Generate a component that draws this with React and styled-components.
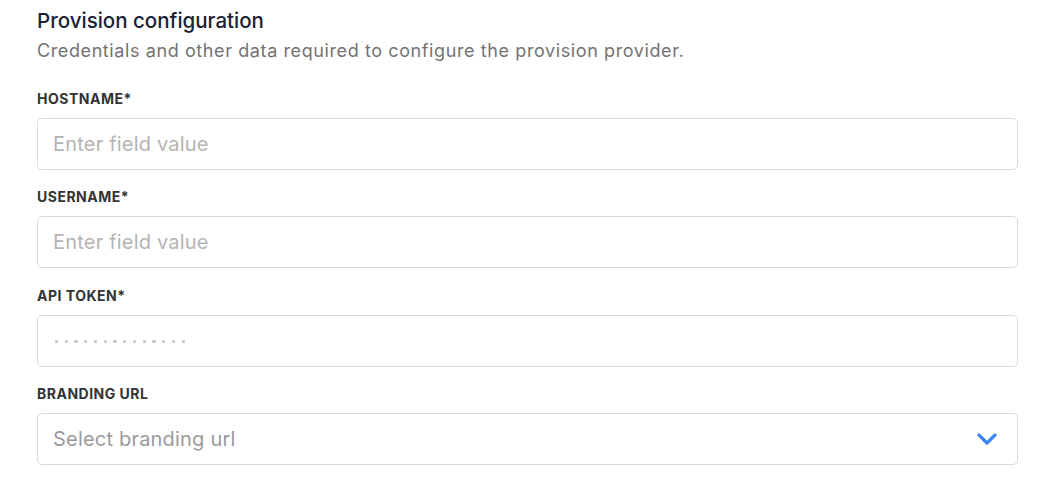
import React from 'react';
import styled, { createGlobalStyle } from 'styled-components';

const GlobalStyle = createGlobalStyle`
  * { box-sizing: border-box; }
  body {
    margin: 0;
    background: #fff;
    font-family: Inter, "Noto Sans", "Liberation Sans", sans-serif;
  }
`;

const Section = styled.section`
  padding: 9px 42px 0 37px;
`;

const Title = styled.h2`
  margin: 0;
  font-size: 20.5px;
  line-height: 24px;
  font-weight: 500;
  color: #1a2233;
`;

const Subtitle = styled.p`
  margin: 6px 0 0;
  font-size: 18px;
  line-height: 24px;
  letter-spacing: 0.6px;
  color: #737373;
`;

const Fields = styled.div`
  display: flex;
  flex-direction: column;
  gap: 19.4px;
  margin-top: 28px;
`;

const Field = styled.div`
  display: flex;
  flex-direction: column;
  gap: 11px;
`;

const Label = styled.label`
  font-size: 14px;
  line-height: 16px;
  font-weight: 700;
  letter-spacing: 0.5px;
  text-transform: uppercase;
  color: #333;
`;

const InputBox = styled.div`
  height: 52px;
  border: 1px solid #d9d9d9;
  border-radius: 5px;
  background: #fff;
  display: flex;
  align-items: center;
`;

const Input = styled.input`
  width: 100%;
  height: 100%;
  border: 0;
  outline: none;
  background: transparent;
  padding: 0 15px;
  font-family: inherit;
  font-size: 20px;
  letter-spacing: 0.2px;
  color: #333;
  border-radius: 5px;

  &::placeholder {
    color: #b4b4b4;
  }
`;

const Dots = styled.div`
  display: flex;
  gap: 6.55px;
  padding: 2px 0 0 17px;
`;

const Dot = styled.span`
  width: 3.2px;
  height: 3.2px;
  border-radius: 50%;
  background: #c4c4c4;
`;

const SelectText = styled.span`
  flex: 1;
  padding: 0 15px;
  font-size: 20px;
  letter-spacing: 0.2px;
  color: #9a9a9a;
`;

const Chevron = styled.svg`
  margin-right: 20px;
  width: 20px;
  height: 12px;
`;

const fields = [
  { name: 'hostname', label: 'Hostname*', type: 'text' },
  { name: 'username', label: 'Username*', type: 'text' },
  { name: 'token', label: 'API Token*', type: 'password' },
];

const App = () => (
  <>
    <GlobalStyle />
    <Section>
      <Title>Provision configuration</Title>
      <Subtitle>Credentials and other data required to configure the provision provider.</Subtitle>
      <Fields>
        {fields.map(f => (
          <Field key={f.name}>
            <Label htmlFor={f.name}>{f.label}</Label>
            <InputBox>
              {f.type === 'password' ? (
                <Dots>
                  {Array.from({ length: 14 }).map((_, i) => (
                    <Dot key={i} />
                  ))}
                </Dots>
              ) : (
                <Input id={f.name} placeholder="Enter field value" />
              )}
            </InputBox>
          </Field>
        ))}
        <Field>
          <Label>Branding URL</Label>
          <InputBox>
            <SelectText>Select branding url</SelectText>
            <Chevron viewBox="0 0 20 12">
              <path d="M2 2l8 8 8-8" fill="none" stroke="#3b87f5" strokeWidth="3.2" strokeLinecap="round" strokeLinejoin="round" />
            </Chevron>
          </InputBox>
        </Field>
      </Fields>
    </Section>
  </>
);

export default App;
